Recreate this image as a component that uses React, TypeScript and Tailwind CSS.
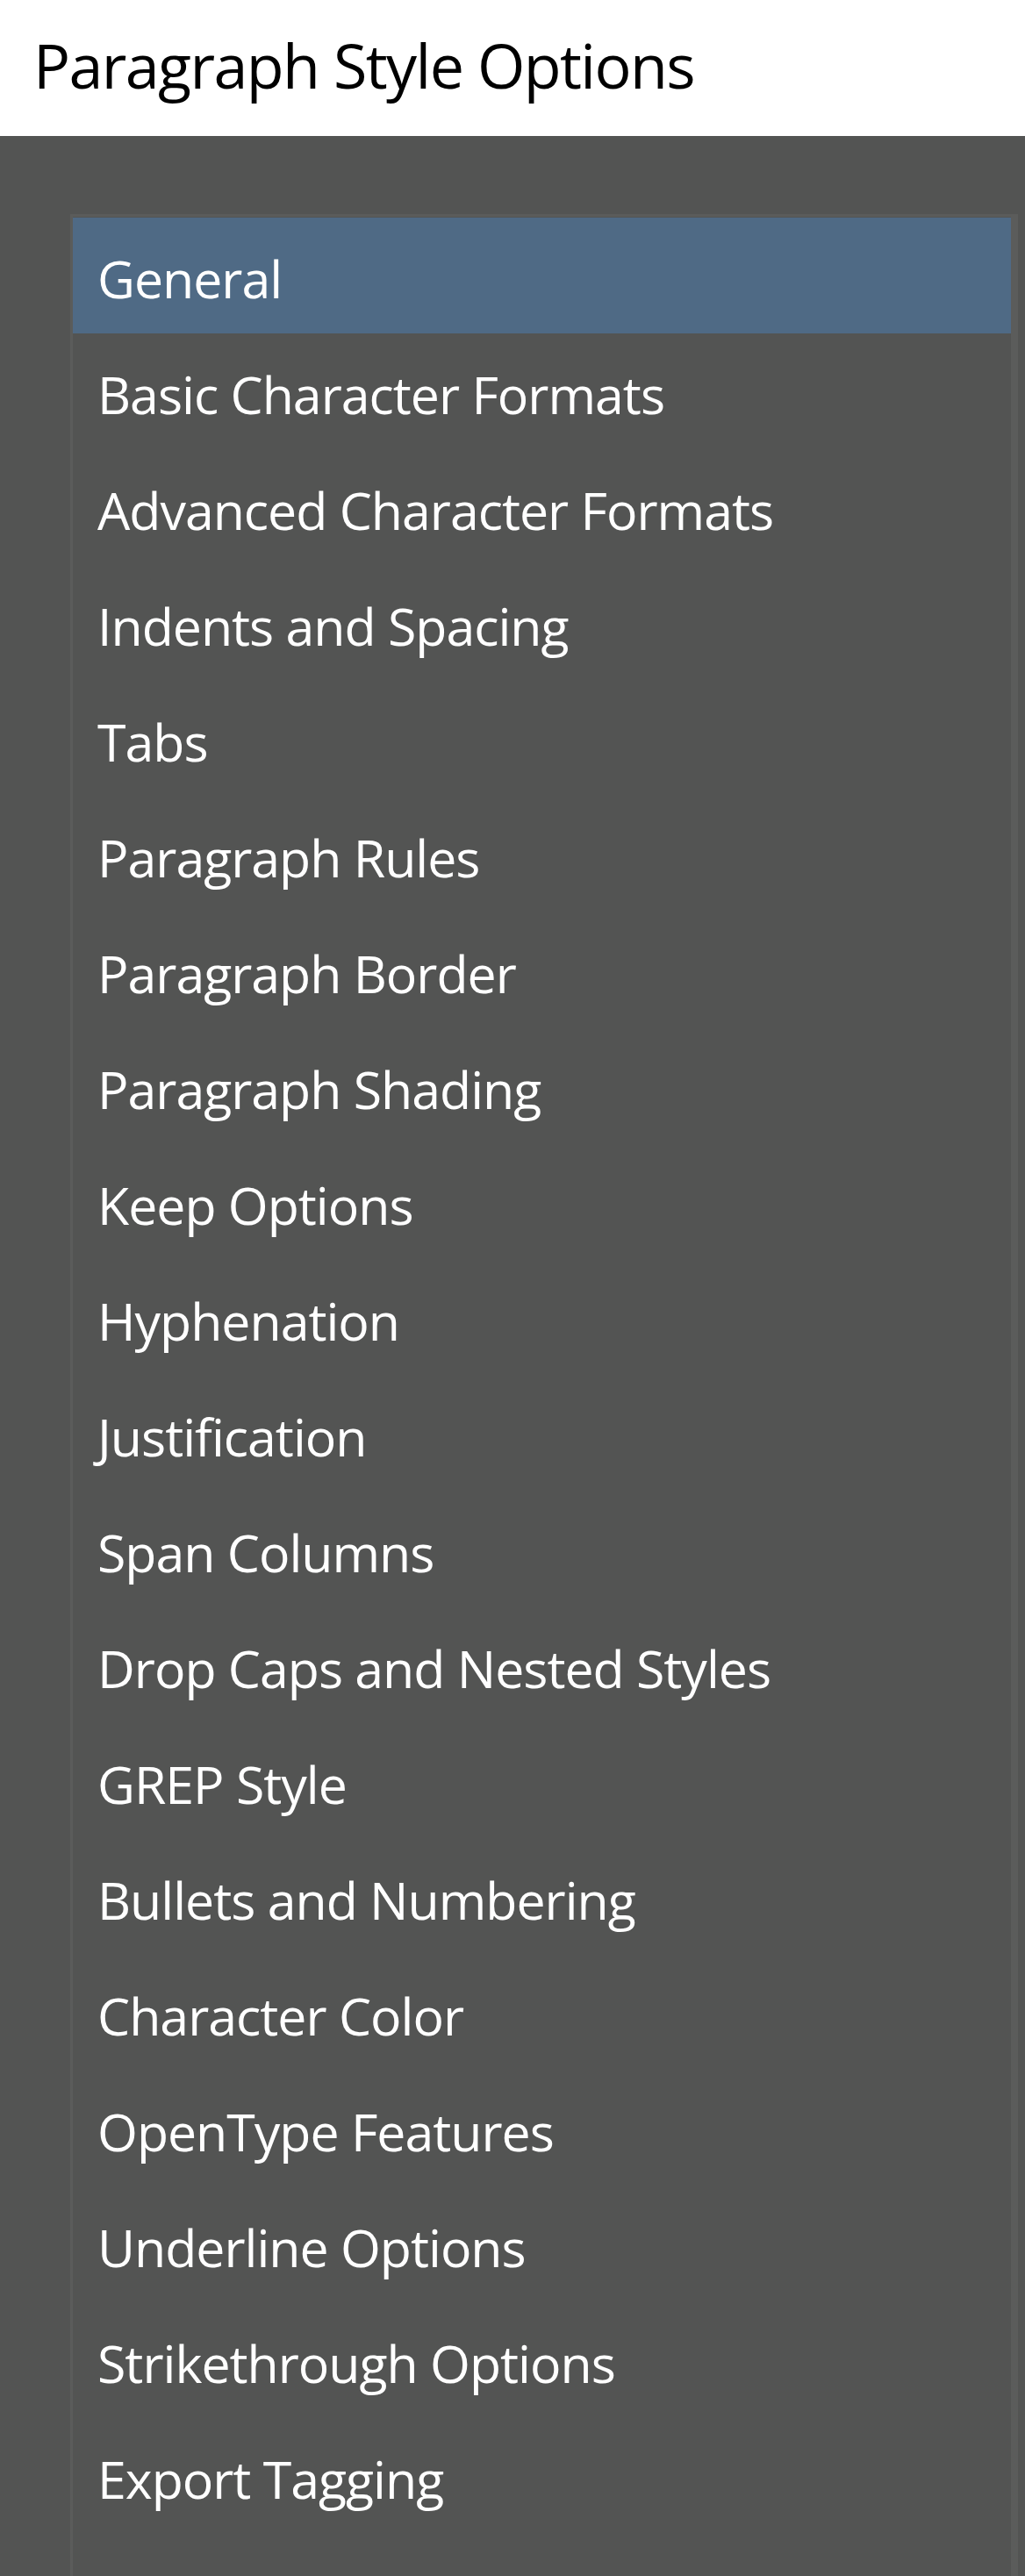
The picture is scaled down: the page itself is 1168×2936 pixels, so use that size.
import React from "react";

const items = [
  "General",
  "Basic Character Formats",
  "Advanced Character Formats",
  "Indents and Spacing",
  "Tabs",
  "Paragraph Rules",
  "Paragraph Border",
  "Paragraph Shading",
  "Keep Options",
  "Hyphenation",
  "Justification",
  "Span Columns",
  "Drop Caps and Nested Styles",
  "GREP Style",
  "Bullets and Numbering",
  "Character Color",
  "OpenType Features",
  "Underline Options",
  "Strikethrough Options",
  "Export Tagging",
];

export default function App() {
  return (
    <div
      className="w-[1168px] h-[2936px] bg-[#535453] overflow-hidden flex flex-col"
      style={{ fontFamily: '"Open Sans", "Noto Sans", sans-serif' }}
    >
      <div className="h-[155px] shrink-0 bg-white pl-[38px] pt-[24px]">
        <div className="text-[70px] leading-[100px] tracking-[-1.6px] text-black">Paragraph Style Options</div>
      </div>
      <div className="flex-1 pt-[89px] pl-[80px] pr-[8px]">
        <div className="h-full border-l-[3px] border-t-[3px] border-r-[8px] border-[#5b5c5b] pt-[1px]">
          {items.map((t, i) => (
            <div
              key={t}
              className={
                "h-[132px] flex items-center pl-[28px] pt-[6px] text-[59px] tracking-[-1px] text-white " +
                (i === 0 ? "bg-[#4f6a85]" : "")
              }
            >
              {t}
            </div>
          ))}
        </div>
      </div>
    </div>
  );
}
